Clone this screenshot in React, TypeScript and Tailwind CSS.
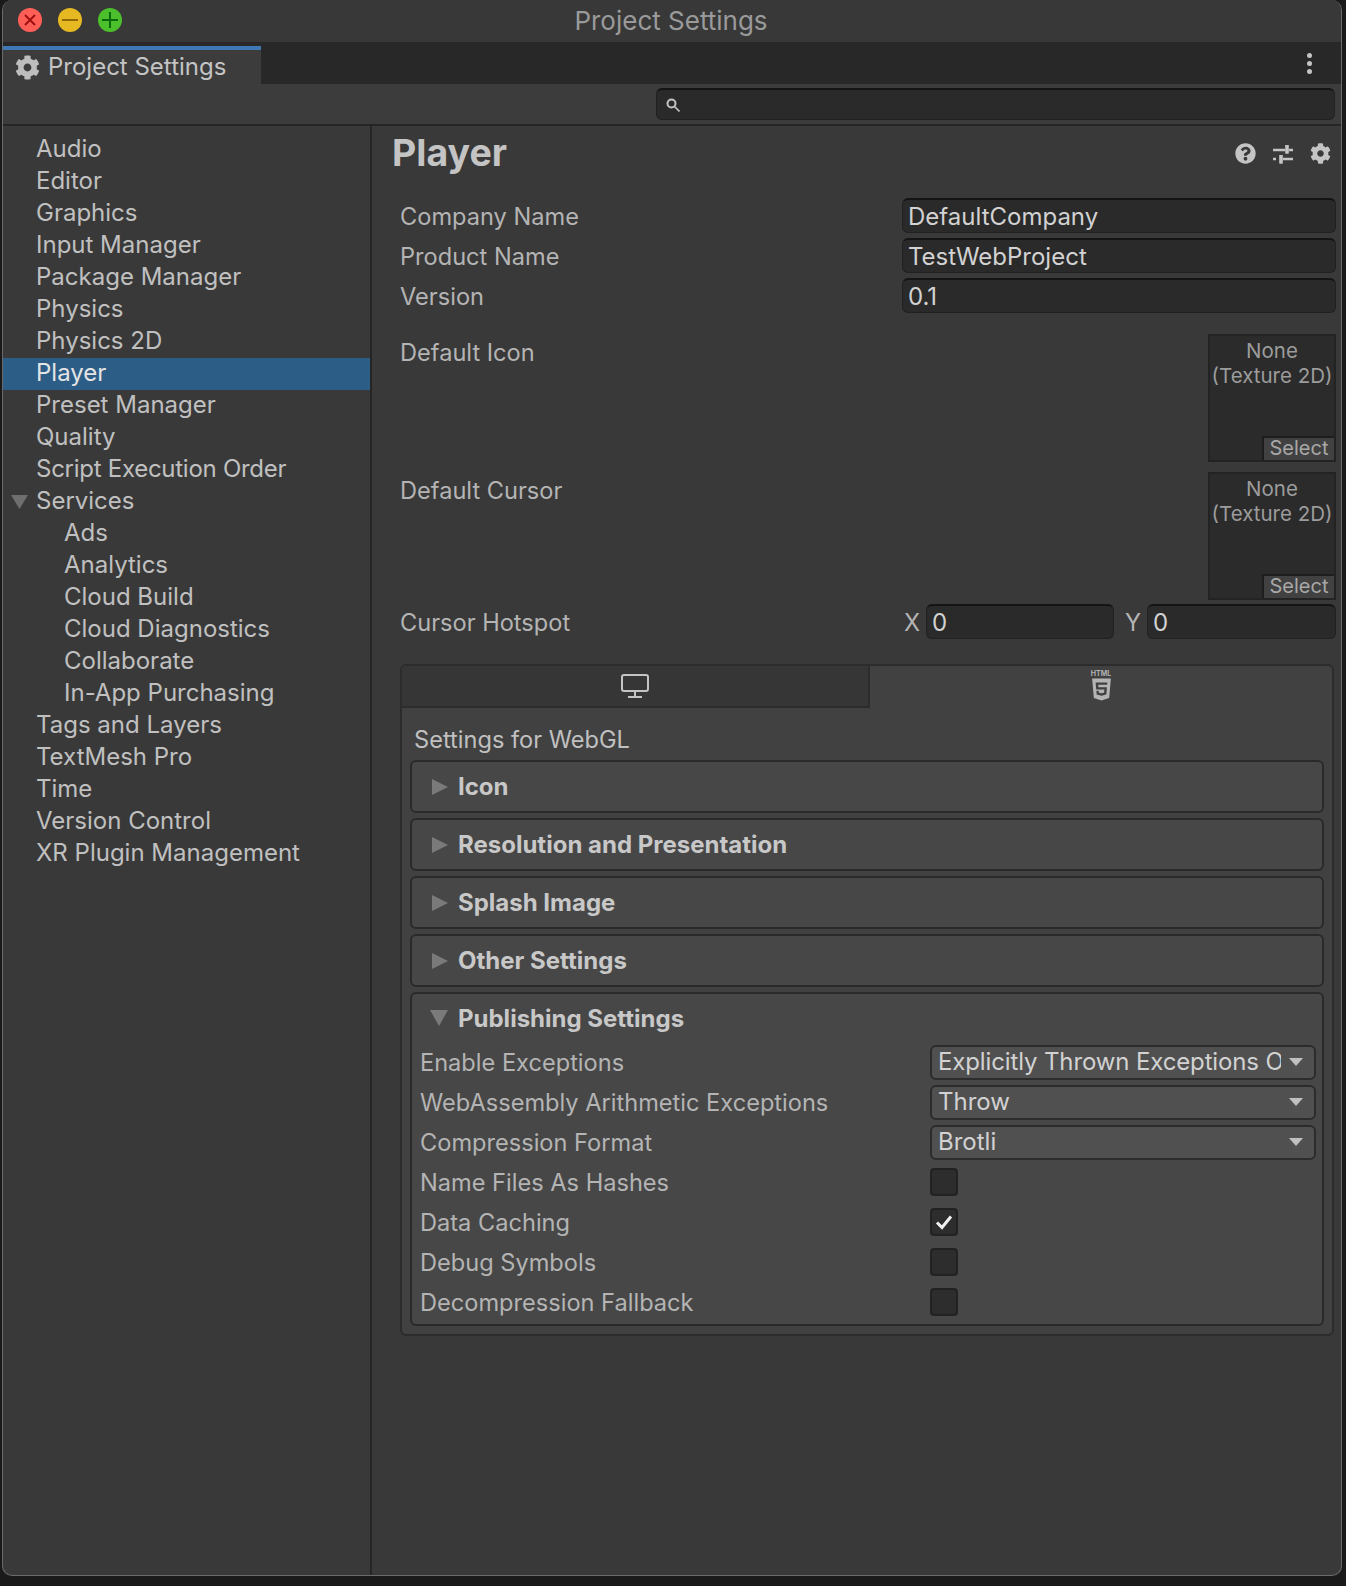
import React from 'react';
import { FaCog, FaQuestionCircle, FaHtml5 } from 'react-icons/fa';

const SIDEBAR: { name: string; indent?: boolean; selected?: boolean; open?: boolean; tight?: boolean }[] = [
    { name: 'Audio' },
    { name: 'Editor' },
    { name: 'Graphics' },
    { name: 'Input Manager' },
    { name: 'Package Manager' },
    { name: 'Physics' },
    { name: 'Physics 2D' },
    { name: 'Player', selected: true },
    { name: 'Preset Manager' },
    { name: 'Quality' },
    { name: 'Script Execution Order', tight: true },
    { name: 'Services', open: true },
    { name: 'Ads', indent: true },
    { name: 'Analytics', indent: true },
    { name: 'Cloud Build', indent: true },
    { name: 'Cloud Diagnostics', indent: true },
    { name: 'Collaborate', indent: true },
    { name: 'In-App Purchasing', indent: true },
    { name: 'Tags and Layers' },
    { name: 'TextMesh Pro' },
    { name: 'Time' },
    { name: 'Version Control' },
    { name: 'XR Plugin Management' },
];

const TriangleRight = () => (
    <svg width="16" height="16" viewBox="0 0 16 16" className="shrink-0">
        <polygon points="0,0 16,8 0,16" fill="#7a7a7a" />
    </svg>
);

const TriangleDown = () => (
    <svg width="18" height="16" viewBox="0 0 18 16" className="shrink-0">
        <polygon points="0,0 18,0 9,16" fill="#7a7a7a" />
    </svg>
);

const TextField = ({ value, className }: { value: string; className: string }) => (
    <div className={`h-[35px] rounded-[6px] border border-[#212121] border-t-[2px] border-t-[#141414] bg-[#2a2a2a] pl-[5px] flex items-center text-[24px] text-[#d2d2d2] ${className}`}>
        <span className="pt-[2px]">{value}</span>
    </div>
);

const ObjectPicker = () => (
    <div className="relative w-[128px] h-[128px] bg-[#2b2b2b] border-[2px] border-[#232323] text-[20.5px] leading-[25px] text-[#9c9c9c] text-center pt-[2px]">
        <div>None</div>
        <div className="whitespace-nowrap">(Texture 2D)</div>
        <div className="absolute right-0 bottom-0 w-[72px] h-[24px] pb-[2px] bg-[#414141] border-t-[2px] border-l-[2px] border-[#1d1d1d] flex items-center justify-center text-[20px] text-[#a8a8a8]">
            Select
        </div>
    </div>
);

const Foldout = ({ title }: { title: string }) => (
    <div className="h-[53px] mt-[5px] mx-[8px] rounded-[6px] border-[2px] border-[#2a2a2a] bg-[#474747] flex items-center pl-[20px]">
        <TriangleRight />
        <span className="ml-[10px] pt-[1px] text-[24px] font-bold text-[#c8c8c8]">{title}</span>
    </div>
);

const Dropdown = ({ value, tight }: { value: string; tight?: boolean }) => (
    <div className="w-[386px] h-[35px] rounded-[6px] border-[2px] border-[#2c2c2c] bg-[#505050] flex items-center pl-[6px] pr-[11px] text-[24px] text-[#d2d2d2]">
        <span className={`flex-1 overflow-hidden whitespace-nowrap ${tight ? 'tracking-[-0.13px]' : ''}`}>{value}</span>
        <svg width="14" height="8" viewBox="0 0 14 8" className="ml-[8px] shrink-0">
            <polygon points="0,0 14,0 7,8" fill="#c0c0c0" />
        </svg>
    </div>
);

const Checkbox = ({ checked }: { checked?: boolean }) => (
    <div className="w-[28px] h-[28px] rounded-[4px] border-[2px] border-[#222222] bg-[#2d2d2d] flex items-center justify-center">
        {checked && (
            <svg width="18" height="16" viewBox="0 0 18 16">
                <path d="M2 8.5 L7 13.5 L16 2.5" fill="none" stroke="#f0f0f0" strokeWidth="3" />
            </svg>
        )}
    </div>
);

const PublishRow = ({ label, children }: { label: string; children: React.ReactNode }) => (
    <div className="h-[40px] flex items-center pl-[8px]">
        <span className="w-[510px] shrink-0 pt-[2px] text-[#b4b4b4]">{label}</span>
        {children}
    </div>
);

const App = () => {
    return (
        <div className="w-[1346px] h-[1586px] bg-[#1a1a1a] overflow-hidden pl-[2px] text-[23.6px] leading-[32px]" style={{ fontFamily: 'Inter, "Liberation Sans", sans-serif' }}>
            <div className="w-[1340px] h-[1576px] flex flex-col rounded-t-[10px] rounded-b-[10px] overflow-hidden bg-[#393939] border-l border-r border-b border-[#6a6a6a]">
                {/* title bar */}
                <div className="relative h-[42px] shrink-0 bg-[#383838] flex items-center justify-center pr-[2px] text-[26px] text-[#9a9a9a]">
                    <div className="absolute left-[15px] top-[8px] flex gap-[16px]">
                        <div className="w-[24px] h-[24px] rounded-full bg-[#ff5f57] flex items-center justify-center">
                            <svg width="12" height="12" viewBox="0 0 12 12">
                                <path d="M1 1 L11 11 M11 1 L1 11" stroke="#a01010" strokeWidth="2" />
                            </svg>
                        </div>
                        <div className="w-[24px] h-[24px] rounded-full bg-[#e6b822] flex items-center justify-center">
                            <div className="w-[16px] h-[2px] bg-[#8f6a06]" />
                        </div>
                        <div className="w-[24px] h-[24px] rounded-full bg-[#4cc02c] flex items-center justify-center">
                            <svg width="16" height="16" viewBox="0 0 16 16">
                                <path d="M8 0 V16 M0 8 H16" stroke="#0a6a0a" strokeWidth="2" />
                            </svg>
                        </div>
                    </div>
                    Project Settings
                </div>

                {/* tab row */}
                <div className="relative h-[42px] shrink-0 bg-[#282828] flex items-end justify-between">
                    <div className="w-[258px] h-[38px] bg-[#3c3c3c] border-t-[4px] border-[#3f78b5] flex items-center pl-[12px] text-[24px] text-[#c4c4c4]">
                        <FaCog size={25} color="#bdbdbd" />
                        <span className="ml-[8px]">Project Settings</span>
                    </div>
                    <div className="self-center mr-[29px] flex flex-col gap-[3px]">
                        <div className="w-[5px] h-[5px] rounded-full bg-[#c4c4c4]" />
                        <div className="w-[5px] h-[5px] rounded-full bg-[#c4c4c4]" />
                        <div className="w-[5px] h-[5px] rounded-full bg-[#c4c4c4]" />
                    </div>
                </div>

                {/* toolbar */}
                <div className="h-[42px] shrink-0 bg-[#3c3c3c] border-b-[2px] border-[#252525] flex justify-end items-start pt-[4px] pr-[6px]">
                    <div className="w-[679px] h-[32px] rounded-[6px] bg-[#2a2a2a] border border-[#212121] border-t-[2px] border-t-[#141414] flex items-center pl-[9px]">
                        <svg width="14" height="14" viewBox="0 0 14 14">
                            <circle cx="5.5" cy="5.5" r="4" fill="none" stroke="#c4c4c4" strokeWidth="2" />
                            <path d="M8.5 8.5 L13.5 13.5" stroke="#c4c4c4" strokeWidth="1.6" />
                        </svg>
                    </div>
                </div>

                <div className="flex-1 flex min-h-0">
                    {/* sidebar */}
                    <div className="w-[369px] shrink-0 border-r-[2px] border-[#252525] pt-[8px] text-[24px] text-[#c0c0c0]">
                        {SIDEBAR.map(item => (
                            <div
                                key={item.name}
                                className={`h-[32px] pb-[2px] flex items-center relative ${item.indent ? 'pl-[61px]' : 'pl-[33px]'} ${item.selected ? 'bg-[#2c5d87] text-[#e4e4e4]' : ''} ${item.tight ? 'tracking-[-0.27px]' : ''}`}
                            >
                                {item.open && (
                                    <svg width="17" height="14" viewBox="0 0 17 14" className="absolute left-[8px] top-[9px]">
                                        <polygon points="0,0 17,0 8.5,14" fill="#6e6e6e" />
                                    </svg>
                                )}
                                {item.name}
                            </div>
                        ))}
                    </div>

                    {/* inspector */}
                    <div className="flex-1 min-w-0 pl-[20px] pr-[5px] text-[#b4b4b4]">
                        <div className="h-[55px] flex items-center justify-between">
                            <h1 className="-mt-[2px] text-[37.5px] font-bold text-[#c4c4c4]">Player</h1>
                            <div className="flex items-center gap-[17px] mr-[5px]">
                                <FaQuestionCircle size={21} color="#c4c4c4" />
                                <svg width="20" height="20" viewBox="0 0 20 20">
                                    <path d="M0 6 H12 M16 6 H20 M14 1 V9.5 M0 15 H3 M10 15 H20 M8 11 V19.5" stroke="#c4c4c4" strokeWidth="2.5" fill="none" />
                                    <path d="M14 1 V9.5 M8 11 V19.5" stroke="#c4c4c4" strokeWidth="3.5" fill="none" />
                                </svg>
                                <FaCog size={21} color="#c4c4c4" />
                            </div>
                        </div>

                        <div className="pl-[8px] mt-[17px] flex flex-col gap-[5px]">
                            <div className="flex items-center justify-between">
                                <span className="pt-[2px]">Company Name</span>
                                <TextField value="DefaultCompany" className="w-[434px]" />
                            </div>
                            <div className="flex items-center justify-between">
                                <span className="pt-[2px]">Product Name</span>
                                <TextField value="TestWebProject" className="w-[434px]" />
                            </div>
                            <div className="flex items-center justify-between">
                                <span className="pt-[2px]">Version</span>
                                <TextField value="0.1" className="w-[434px]" />
                            </div>
                        </div>

                        <div className="pl-[8px] mt-[21px] flex justify-between items-start">
                            <span className="mt-[3px]">Default Icon</span>
                            <ObjectPicker />
                        </div>
                        <div className="pl-[8px] mt-[10px] flex justify-between items-start">
                            <span className="mt-[3px]">Default Cursor</span>
                            <ObjectPicker />
                        </div>
                        <div className="pl-[8px] mt-[4px] flex items-center">
                            <span className="flex-1 pt-[2px]">Cursor Hotspot</span>
                            <span className="w-[15px] mr-[7px] pt-[2px]">X</span>
                            <TextField value="0" className="w-[188px]" />
                            <span className="w-[15px] ml-[11px] mr-[7px] pt-[2px]">Y</span>
                            <TextField value="0" className="w-[189px]" />
                        </div>

                        {/* platform tabs */}
                        <div className="mt-[25px] ml-[8px] w-[934px] h-[672px] rounded-[6px] border-[2px] border-[#2c2c2c] bg-[#414141]">
                            <div className="flex h-[42px]">
                                <div className="w-[468px] bg-[#363636] border-r-[2px] border-b-[2px] border-[#2c2c2c] rounded-tl-[4px] flex items-center justify-center">
                                    <svg width="28" height="24" viewBox="0 0 28 24">
                                        <rect x="1" y="1" width="26" height="16" rx="2" fill="none" stroke="#c4c4c4" strokeWidth="2" />
                                        <path d="M14 18 V22 M7 23 H21" stroke="#c4c4c4" strokeWidth="2" />
                                    </svg>
                                </div>
                                <div className="flex-1 flex flex-col items-center justify-center pb-[2px]">
                                    <span className="text-[7px] leading-[7px] font-bold text-[#b4b4b4]">HTML</span>
                                    <FaHtml5 size={25} color="#b4b4b4" />
                                </div>
                            </div>
                            <div className="pl-[12px] h-[52px] pt-[11px] flex items-center text-[#c0c0c0]">Settings for WebGL</div>
                            <div className="-mt-[5px]">
                                <Foldout title="Icon" />
                                <Foldout title="Resolution and Presentation" />
                                <Foldout title="Splash Image" />
                                <Foldout title="Other Settings" />
                            </div>
                            <div className="mt-[5px] mx-[8px] h-[334px] rounded-[6px] border-[2px] border-[#2a2a2a] bg-[#474747]">
                                <div className="h-[48px] flex items-center pl-[18px]">
                                    <TriangleDown />
                                    <span className="ml-[10px] pt-[1px] text-[24px] font-bold text-[#c8c8c8]">Publishing Settings</span>
                                </div>
                                <PublishRow label="Enable Exceptions"><Dropdown value="Explicitly Thrown Exceptions Only" tight /></PublishRow>
                                <PublishRow label="WebAssembly Arithmetic Exceptions"><Dropdown value="Throw" /></PublishRow>
                                <PublishRow label="Compression Format"><Dropdown value="Brotli" /></PublishRow>
                                <PublishRow label="Name Files As Hashes"><Checkbox /></PublishRow>
                                <PublishRow label="Data Caching"><Checkbox checked /></PublishRow>
                                <PublishRow label="Debug Symbols"><Checkbox /></PublishRow>
                                <PublishRow label="Decompression Fallback"><Checkbox /></PublishRow>
                            </div>
                        </div>
                    </div>
                </div>
            </div>
        </div>
    );
};

export default App;
